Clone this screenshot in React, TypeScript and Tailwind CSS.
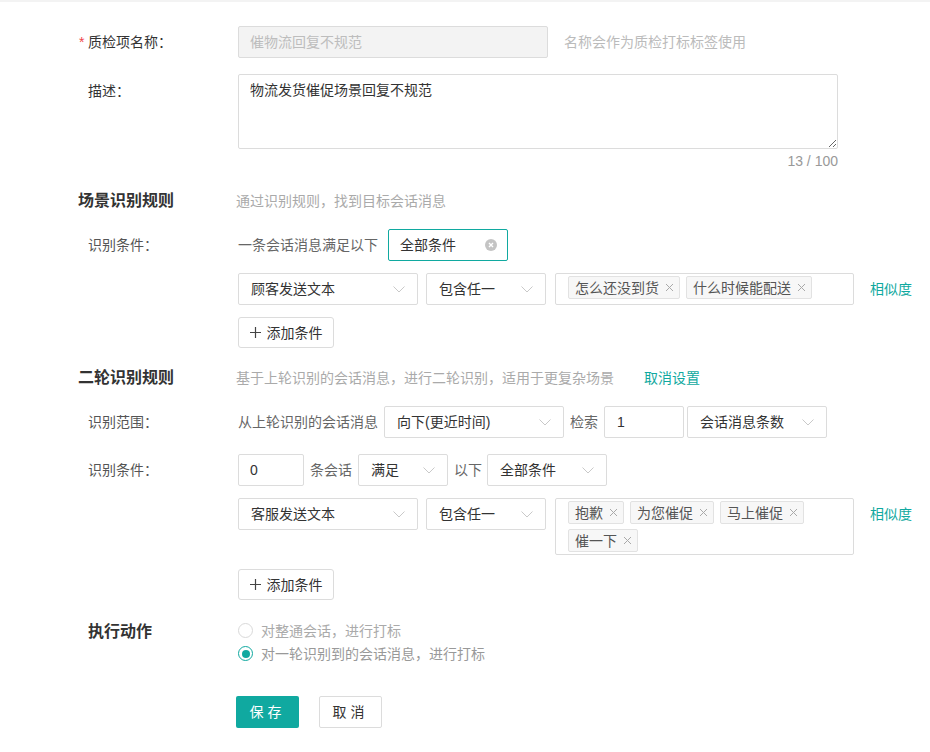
import React from "react";

function Chevron() {
  return (
    <svg width="12" height="7" viewBox="0 0 12 7" className="shrink-0">
      <polyline points="0.5,0.5 6,6 11.5,0.5" fill="none" stroke="#c9c9c9" strokeWidth="1" />
    </svg>
  );
}

function ClearIcon() {
  return (
    <svg width="12" height="12" viewBox="0 0 12 12" className="shrink-0">
      <circle cx="6" cy="6" r="6" fill="#c4c4c4" />
      <path d="M4 4 L8 8 M8 4 L4 8" stroke="#fff" strokeWidth="1.4" />
    </svg>
  );
}

function TagX() {
  return (
    <svg width="9" height="9" viewBox="0 0 9 9" className="shrink-0">
      <path d="M1 1 L8 8 M8 1 L1 8" stroke="#a9a9a9" strokeWidth="1" />
    </svg>
  );
}

function Select({ value, className }: { value: string; className: string }) {
  return (
    <div
      className={`flex h-[32px] items-center justify-between rounded-[2px] border border-[#dcdcdc] bg-white pl-[12px] pr-[12px] text-[#333] ${className}`}
    >
      <span>{value}</span>
      <Chevron />
    </div>
  );
}

function Tag({ text }: { text: string }) {
  return (
    <span className="flex h-[23px] items-center gap-[6px] rounded-[2px] border border-[#e2e2e2] bg-[#f7f7f7] pl-[6px] pr-[5px] text-[#555]">
      {text}
      <TagX />
    </span>
  );
}

function Label({ children }: { children: React.ReactNode }) {
  return <div className="w-[160px] shrink-0 pl-[10px] text-[#555]">{children}</div>;
}

function AddButton({ className }: { className: string }) {
  return (
    <div className={`ml-[160px] flex h-[31px] w-[96px] items-center justify-center gap-[6px] rounded-[3px] border border-[#dcdcdc] bg-white text-[#333] ${className}`}>
      <svg width="11" height="11" viewBox="0 0 11 11">
        <path d="M5.5 0 V11 M0 5.5 H11" stroke="#444" strokeWidth="1.2" />
      </svg>
      添加条件
    </div>
  );
}

function ConditionRow({ field, tags, className }: { field: string; tags: string[]; className: string }) {
  return (
    <div className={`ml-[160px] flex items-start ${className}`}>
      <Select value={field} className="w-[180px]" />
      <Select value="包含任一" className="ml-[8px] w-[120px]" />
      <div className="ml-[9px] flex min-h-[32px] w-[299px] flex-wrap content-start gap-x-[6px] gap-y-[5px] rounded-[2px] border border-[#dcdcdc] bg-white px-[12px] py-[2px]">
        {tags.map((t) => (
          <Tag key={t} text={t} />
        ))}
      </div>
      <span className="ml-[16px] leading-[32px] text-[#10a9a0]">相似度</span>
    </div>
  );
}

export default function App() {
  return (
    <div className="min-h-[752px] w-[930px] bg-white font-['Liberation_Sans','Noto_Sans_CJK_SC',sans-serif] text-[14px] leading-[20px]">
      <div className="h-[2px] bg-[#f3f3f3]" />
      <div className="pl-[78px]">
        {/* 质检项名称 */}
        <div className="mt-[24px] flex items-center">
          <div className="flex w-[160px] shrink-0 items-center pl-[1px] text-[#333]">
            <span className="w-[9px] text-[#f0464b]">*</span>
            质检项名称：
          </div>
          <div className="flex h-[32px] w-[310px] items-center rounded-[2px] border border-[#dcdcdc] bg-[#f3f3f3] pl-[11px] text-[#bdbdbd]">
            催物流回复不规范
          </div>
          <span className="ml-[16px] text-[#bbb]">名称会作为质检打标标签使用</span>
        </div>

        {/* 描述 */}
        <div className="mt-[16px] flex items-start">
          <div className="w-[160px] shrink-0 pl-[10px] pt-[7px] text-[#333]">描述：</div>
          <div className="w-[600px]">
            <textarea
              readOnly
              value="物流发货催促场景回复不规范"
              className="block h-[75px] w-[600px] rounded-[2px] border border-[#dcdcdc] px-[11px] pt-[5px] text-[#333] outline-none"
            />
            <div className="mt-[2px] text-right text-[#999]">13 / 100</div>
          </div>
        </div>

        {/* 场景识别规则 */}
        <div className="mt-[18px] flex items-center">
          <div className="w-[158px] shrink-0 text-[16px] font-bold leading-[24px] text-[#333]">场景识别规则</div>
          <span className="text-[#aaa]">通过识别规则，找到目标会话消息</span>
        </div>

        <div className="mt-[16px] flex items-center">
          <Label>识别条件：</Label>
          <span className="text-[#666]">一条会话消息满足以下</span>
          <div className="ml-[10px] flex h-[32px] w-[120px] items-center justify-between rounded-[2px] border border-[#10a9a0] bg-white pl-[11px] pr-[10px] text-[#333]">
            <span>全部条件</span>
            <ClearIcon />
          </div>
        </div>

        <ConditionRow className="mt-[12px]" field="顾客发送文本" tags={["怎么还没到货", "什么时候能配送"]} />
        <AddButton className="mt-[12px]" />

        {/* 二轮识别规则 */}
        <div className="mt-[18px] flex items-center">
          <div className="w-[158px] shrink-0 text-[16px] font-bold leading-[24px] text-[#333]">二轮识别规则</div>
          <span className="text-[#aaa]">基于上轮识别的会话消息，进行二轮识别，适用于更复杂场景</span>
          <span className="ml-[30px] text-[#10a9a0]">取消设置</span>
        </div>

        <div className="mt-[16px] flex items-center">
          <Label>识别范围：</Label>
          <span className="text-[#666]">从上轮识别的会话消息</span>
          <Select value="向下(更近时间)" className="ml-[6px] w-[180px]" />
          <span className="ml-[6px] text-[#666]">检索</span>
          <div className="ml-[6px] flex h-[32px] w-[80px] items-center rounded-[2px] border border-[#dcdcdc] pl-[12px] text-[#333]">1</div>
          <Select value="会话消息条数" className="ml-[3px] w-[140px]" />
        </div>

        <div className="mt-[16px] flex items-center">
          <Label>识别条件：</Label>
          <div className="flex h-[32px] w-[66px] items-center rounded-[2px] border border-[#dcdcdc] pl-[11px] text-[#333]">0</div>
          <span className="ml-[6px] text-[#666]">条会话</span>
          <Select value="满足" className="ml-[6px] w-[90px]" />
          <span className="ml-[6px] text-[#666]">以下</span>
          <Select value="全部条件" className="ml-[5px] w-[120px]" />
        </div>

        <ConditionRow className="mt-[12px]" field="客服发送文本" tags={["抱歉", "为您催促", "马上催促", "催一下"]} />
        <AddButton className="mt-[14px]" />

        {/* 执行动作 */}
        <div className="mt-[19px] flex items-start">
          <div className="w-[160px] shrink-0 pl-[10px] pt-[1px] text-[16px] font-bold leading-[24px] text-[#333]">执行动作</div>
          <div className="flex flex-col">
            <label className="flex h-[23px] items-center gap-[8px] text-[#aaa]">
              <span className="h-[15px] w-[15px] rounded-full border border-[#d9d9d9] bg-white" />
              对整通会话，进行打标
            </label>
            <label className="flex h-[23px] items-center gap-[8px] text-[#999]">
              <span className="flex h-[15px] w-[15px] items-center justify-center rounded-full border border-[#10a9a0] bg-white">
                <span className="h-[8px] w-[8px] rounded-full bg-[#10a9a0]" />
              </span>
              对一轮识别到的会话消息，进行打标
            </label>
          </div>
        </div>

        <div className="ml-[158px] mt-[31px] flex gap-[20px]">
          <button className="h-[32px] w-[63px] rounded-[2px] bg-[#10a9a0] tracking-[4px] text-white">保存</button>
          <button className="h-[32px] w-[63px] rounded-[2px] border border-[#dcdcdc] bg-white tracking-[4px] text-[#333]">取消</button>
        </div>
      </div>
    </div>
  );
}
